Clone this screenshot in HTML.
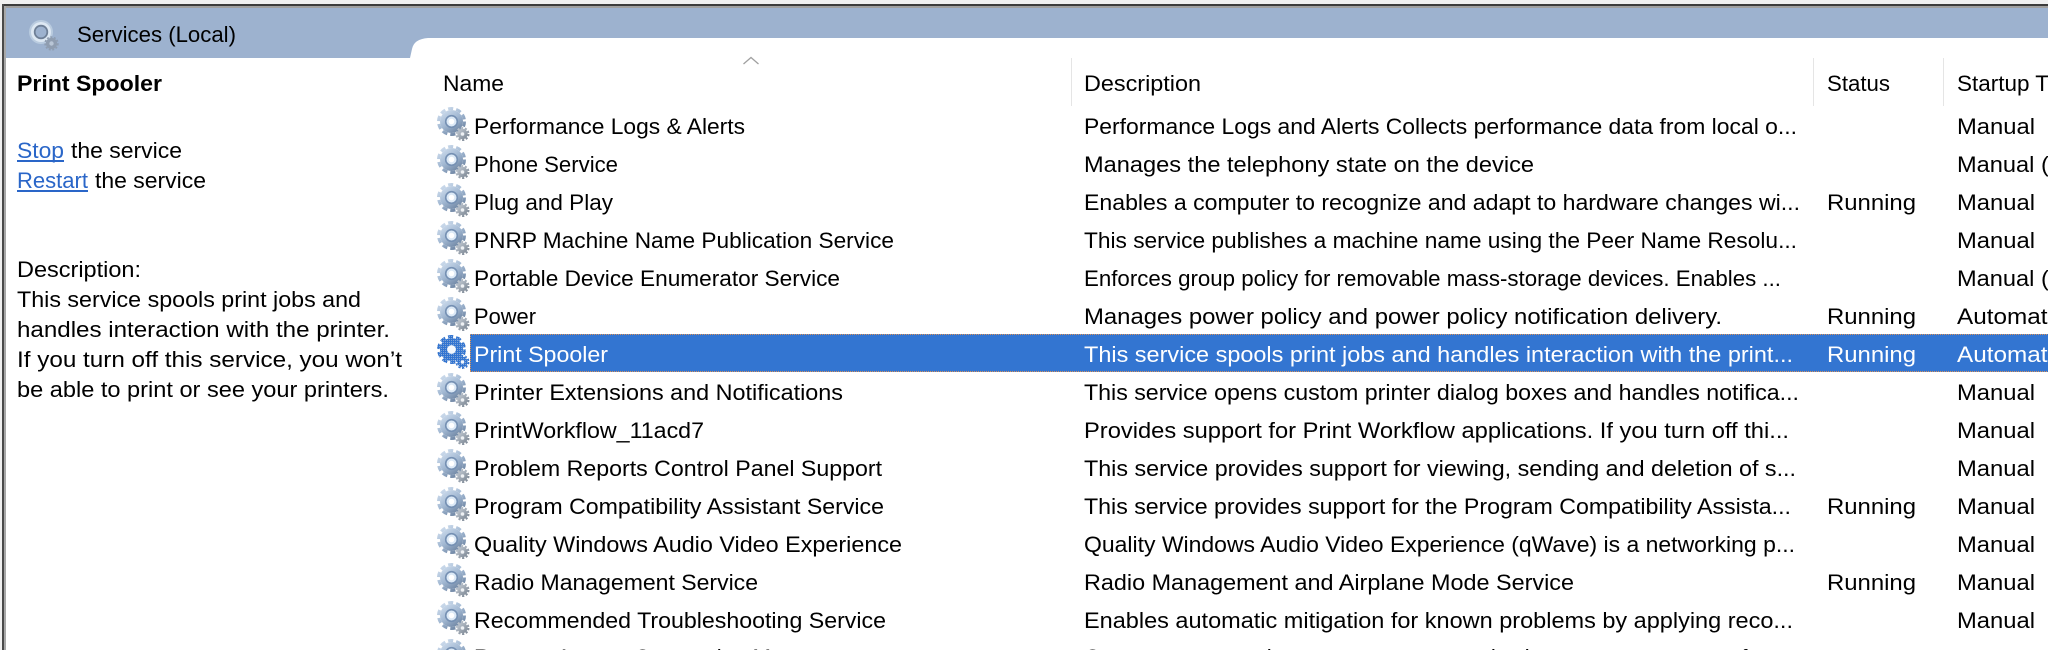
<!DOCTYPE html>
<html lang="en">
<head>
<meta charset="utf-8">
<title>Services (Local)</title>
<style>
html,body{margin:0;padding:0;background:#fff;width:2048px;height:650px;overflow:hidden}
svg{display:block}
text{font-family:"Liberation Sans",sans-serif;font-size:22.5px;fill:#000}
.b{font-weight:bold}
.l{fill:#2a66c8}
.w{fill:#fff}
</style>
</head>
<body>
<svg xmlns="http://www.w3.org/2000/svg" width="2048" height="650" viewBox="0 0 2048 650">
<defs>
<linearGradient id="g1" x1="0.1" y1="0" x2="0.8" y2="1">
<stop offset="0" stop-color="#d0deee"/><stop offset=".5" stop-color="#a3b9d3"/><stop offset="1" stop-color="#6b82a0"/>
</linearGradient>
<linearGradient id="g2" x1="0" y1="0" x2="1" y2="1">
<stop offset="0" stop-color="#c4ccd5"/><stop offset="1" stop-color="#7a8592"/>
</linearGradient>
<pattern id="dith" width="2" height="2" patternUnits="userSpaceOnUse">
<rect width="2" height="2" fill="#3375d1"/>
<rect width="1" height="1" fill="#7fa4d6"/>
</pattern>
<g id="gear">
<circle cx="14.5" cy="13.5" r="11.5" fill="url(#g1)"/>
<circle cx="14.5" cy="13.5" r="13" fill="none" stroke="url(#g1)" stroke-width="3" stroke-dasharray="5.2 3"/>
<circle cx="14.5" cy="13.5" r="6.6" fill="#7590b3"/>
<circle cx="14.5" cy="13.5" r="5" fill="#dce9f6"/>
<circle cx="14.5" cy="13.5" r="2.8" fill="#fff"/>
<circle cx="25.5" cy="26" r="5.2" fill="url(#g2)"/>
<circle cx="25.5" cy="26" r="6" fill="none" stroke="url(#g2)" stroke-width="2" stroke-dasharray="2.2 1.6"/>
<circle cx="25.5" cy="26" r="1.8" fill="#eef1f4"/>
</g>
<g id="gearsel">
<circle cx="14.5" cy="13.5" r="11.5" fill="url(#dith)"/>
<circle cx="14.5" cy="13.5" r="13" fill="none" stroke="url(#dith)" stroke-width="3" stroke-dasharray="5.2 3"/>
<circle cx="14.5" cy="13.5" r="4.4" fill="#f4f8fd"/>
<circle cx="25.5" cy="26" r="5.2" fill="url(#dith)"/>
<circle cx="25.5" cy="26" r="6" fill="none" stroke="url(#dith)" stroke-width="2" stroke-dasharray="2.2 1.6"/>
<circle cx="25.5" cy="26" r="1.8" fill="#f4f8fd"/>
</g>
<g id="gearlite">
<circle cx="13" cy="13" r="12" fill="#b9cbdf"/>
<circle cx="13" cy="13" r="10" fill="#dde8f3"/>
<circle cx="13" cy="13" r="7.2" fill="#6e7f96"/>
<circle cx="13" cy="13" r="5.4" fill="#9db2cf"/>
<circle cx="23.5" cy="24.5" r="5.6" fill="#8f9db0"/>
<circle cx="23.5" cy="24.5" r="6.4" fill="none" stroke="#8f9db0" stroke-width="1.6" stroke-dasharray="2 1.6"/>
<circle cx="23.5" cy="24.5" r="2.2" fill="#b9c6d6"/>
</g>
</defs>

<!-- window chrome -->
<rect width="2048" height="650" fill="#fff"/>
<rect x="0" y="0" width="2048" height="4" fill="#f0f0f0"/>
<rect x="0" y="0" width="3" height="650" fill="#f0f0f0"/>
<rect x="2" y="4" width="2046" height="2" fill="#3c3c3c"/>
<rect x="6" y="6" width="2042" height="2" fill="#a0a0a0"/>
<rect x="2" y="4" width="2" height="646" fill="#4a4a4a"/>
<rect x="4" y="6" width="2" height="644" fill="#a8a8a8"/>

<!-- title bar -->
<rect x="6" y="8" width="2042" height="50" fill="#9db2cf"/>
<path d="M410,58 L412,49 Q414,39 428,38 L2048,38 L2048,58 Z" fill="#fff"/>
<use href="#gearlite" x="28" y="19"/>
<text x="77" y="42" textLength="159" lengthAdjust="spacingAndGlyphs">Services (Local)</text>

<!-- left panel -->
<text class="b" x="17" y="91" textLength="145" lengthAdjust="spacingAndGlyphs">Print Spooler</text>
<text class="l" x="17" y="158" textLength="47" lengthAdjust="spacingAndGlyphs">Stop</text>
<rect x="17" y="160" width="47" height="2" fill="#2a66c8"/>
<text x="71" y="158" textLength="111" lengthAdjust="spacingAndGlyphs">the service</text>
<text class="l" x="17" y="188" textLength="71" lengthAdjust="spacingAndGlyphs">Restart</text>
<rect x="17" y="190" width="71" height="2" fill="#2a66c8"/>
<text x="95" y="188" textLength="111" lengthAdjust="spacingAndGlyphs">the service</text>
<text x="17" y="277" textLength="124" lengthAdjust="spacingAndGlyphs">Description:</text>
<text x="17" y="307" textLength="344" lengthAdjust="spacingAndGlyphs">This service spools print jobs and</text>
<text x="17" y="337" textLength="373" lengthAdjust="spacingAndGlyphs">handles interaction with the printer.</text>
<text x="17" y="367" textLength="385" lengthAdjust="spacingAndGlyphs">If you turn off this service, you won’t</text>
<text x="17" y="397" textLength="372" lengthAdjust="spacingAndGlyphs">be able to print or see your printers.</text>

<!-- column headers -->
<path d="M743.5,64 L751,57.5 L758.5,64" fill="none" stroke="#a0a0a0" stroke-width="1.3"/>
<rect x="1071" y="58" width="1" height="48" fill="#e5e5e5"/>
<rect x="1813" y="58" width="1" height="48" fill="#e5e5e5"/>
<rect x="1943" y="58" width="1" height="48" fill="#e5e5e5"/>
<text x="443" y="91" textLength="61" lengthAdjust="spacingAndGlyphs">Name</text>
<text x="1084" y="91" textLength="117" lengthAdjust="spacingAndGlyphs">Description</text>
<text x="1827" y="91" textLength="63" lengthAdjust="spacingAndGlyphs">Status</text>
<text x="1957" y="91" textLength="127" lengthAdjust="spacingAndGlyphs">Startup Type</text>

<!-- selected row -->
<rect x="470" y="334" width="1578" height="38" fill="#3375d1"/>
<path d="M470,334.5 H2048 M470,371.5 H2048 M470.5,334 V372" fill="none" stroke="#d8925a" stroke-width="1" stroke-dasharray="1 1"/>

<!-- icons -->
<use href="#gear" x="437" y="108"/>
<use href="#gear" x="437" y="146"/>
<use href="#gear" x="437" y="184"/>
<use href="#gear" x="437" y="222"/>
<use href="#gear" x="437" y="260"/>
<use href="#gear" x="437" y="298"/>
<use href="#gearsel" x="437" y="336"/>
<use href="#gear" x="437" y="374"/>
<use href="#gear" x="437" y="412"/>
<use href="#gear" x="437" y="450"/>
<use href="#gear" x="437" y="488"/>
<use href="#gear" x="437" y="526"/>
<use href="#gear" x="437" y="564"/>
<use href="#gear" x="437" y="602"/>
<use href="#gear" x="437" y="640"/>

<!-- names -->
<text x="474" y="134" textLength="271" lengthAdjust="spacingAndGlyphs">Performance Logs &amp; Alerts</text>
<text x="474" y="172" textLength="144" lengthAdjust="spacingAndGlyphs">Phone Service</text>
<text x="474" y="210" textLength="139" lengthAdjust="spacingAndGlyphs">Plug and Play</text>
<text x="474" y="248" textLength="420" lengthAdjust="spacingAndGlyphs">PNRP Machine Name Publication Service</text>
<text x="474" y="286" textLength="366" lengthAdjust="spacingAndGlyphs">Portable Device Enumerator Service</text>
<text x="474" y="324" textLength="62" lengthAdjust="spacingAndGlyphs">Power</text>
<text class="w" x="474" y="362" textLength="134" lengthAdjust="spacingAndGlyphs">Print Spooler</text>
<text x="474" y="400" textLength="369" lengthAdjust="spacingAndGlyphs">Printer Extensions and Notifications</text>
<text x="474" y="438" textLength="230" lengthAdjust="spacingAndGlyphs">PrintWorkflow_11acd7</text>
<text x="474" y="476" textLength="408" lengthAdjust="spacingAndGlyphs">Problem Reports Control Panel Support</text>
<text x="474" y="514" textLength="410" lengthAdjust="spacingAndGlyphs">Program Compatibility Assistant Service</text>
<text x="474" y="552" textLength="428" lengthAdjust="spacingAndGlyphs">Quality Windows Audio Video Experience</text>
<text x="474" y="590" textLength="284" lengthAdjust="spacingAndGlyphs">Radio Management Service</text>
<text x="474" y="628" textLength="412" lengthAdjust="spacingAndGlyphs">Recommended Troubleshooting Service</text>
<text x="474" y="665" textLength="366" lengthAdjust="spacingAndGlyphs">Remote Access Connection Manager</text>

<!-- descriptions -->
<text x="1084" y="134" textLength="713" lengthAdjust="spacingAndGlyphs">Performance Logs and Alerts Collects performance data from local o...</text>
<text x="1084" y="172" textLength="450" lengthAdjust="spacingAndGlyphs">Manages the telephony state on the device</text>
<text x="1084" y="210" textLength="716" lengthAdjust="spacingAndGlyphs">Enables a computer to recognize and adapt to hardware changes wi...</text>
<text x="1084" y="248" textLength="713" lengthAdjust="spacingAndGlyphs">This service publishes a machine name using the Peer Name Resolu...</text>
<text x="1084" y="286" textLength="697" lengthAdjust="spacingAndGlyphs">Enforces group policy for removable mass-storage devices. Enables ...</text>
<text x="1084" y="324" textLength="638" lengthAdjust="spacingAndGlyphs">Manages power policy and power policy notification delivery.</text>
<text class="w" x="1084" y="362" textLength="709" lengthAdjust="spacingAndGlyphs">This service spools print jobs and handles interaction with the print...</text>
<text x="1084" y="400" textLength="715" lengthAdjust="spacingAndGlyphs">This service opens custom printer dialog boxes and handles notifica...</text>
<text x="1084" y="438" textLength="705" lengthAdjust="spacingAndGlyphs">Provides support for Print Workflow applications. If you turn off thi...</text>
<text x="1084" y="476" textLength="712" lengthAdjust="spacingAndGlyphs">This service provides support for viewing, sending and deletion of s...</text>
<text x="1084" y="514" textLength="707" lengthAdjust="spacingAndGlyphs">This service provides support for the Program Compatibility Assista...</text>
<text x="1084" y="552" textLength="711" lengthAdjust="spacingAndGlyphs">Quality Windows Audio Video Experience (qWave) is a networking p...</text>
<text x="1084" y="590" textLength="490" lengthAdjust="spacingAndGlyphs">Radio Management and Airplane Mode Service</text>
<text x="1084" y="628" textLength="709" lengthAdjust="spacingAndGlyphs">Enables automatic mitigation for known problems by applying reco...</text>
<text x="1084" y="665" textLength="701" lengthAdjust="spacingAndGlyphs">Creates a connection to a remote network whenever a program refer...</text>

<!-- status -->
<text x="1827" y="210" textLength="89" lengthAdjust="spacingAndGlyphs">Running</text>
<text x="1827" y="324" textLength="89" lengthAdjust="spacingAndGlyphs">Running</text>
<text class="w" x="1827" y="362" textLength="89" lengthAdjust="spacingAndGlyphs">Running</text>
<text x="1827" y="514" textLength="89" lengthAdjust="spacingAndGlyphs">Running</text>
<text x="1827" y="590" textLength="89" lengthAdjust="spacingAndGlyphs">Running</text>

<!-- startup type -->
<text x="1957" y="134" textLength="78" lengthAdjust="spacingAndGlyphs">Manual</text>
<text x="1957" y="172" textLength="230" lengthAdjust="spacingAndGlyphs">Manual (Trigger Start)</text>
<text x="1957" y="210" textLength="78" lengthAdjust="spacingAndGlyphs">Manual</text>
<text x="1957" y="248" textLength="78" lengthAdjust="spacingAndGlyphs">Manual</text>
<text x="1957" y="286" textLength="230" lengthAdjust="spacingAndGlyphs">Manual (Trigger Start)</text>
<text x="1957" y="324" textLength="108" lengthAdjust="spacingAndGlyphs">Automatic</text>
<text class="w" x="1957" y="362" textLength="108" lengthAdjust="spacingAndGlyphs">Automatic</text>
<text x="1957" y="400" textLength="78" lengthAdjust="spacingAndGlyphs">Manual</text>
<text x="1957" y="438" textLength="78" lengthAdjust="spacingAndGlyphs">Manual</text>
<text x="1957" y="476" textLength="78" lengthAdjust="spacingAndGlyphs">Manual</text>
<text x="1957" y="514" textLength="78" lengthAdjust="spacingAndGlyphs">Manual</text>
<text x="1957" y="552" textLength="78" lengthAdjust="spacingAndGlyphs">Manual</text>
<text x="1957" y="590" textLength="78" lengthAdjust="spacingAndGlyphs">Manual</text>
<text x="1957" y="628" textLength="78" lengthAdjust="spacingAndGlyphs">Manual</text>
</svg>
</body>
</html>
